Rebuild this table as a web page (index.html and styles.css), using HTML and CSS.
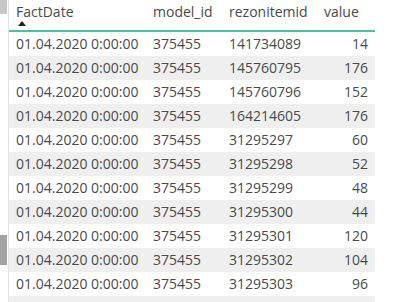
FILE: index.html
```html
<!DOCTYPE html>
<html>
<head>
<meta charset="utf-8">
<link rel="stylesheet" href="styles.css">
</head>
<body>
<div class="page">
  <div class="rail">
    <div class="rail-top"></div>
    <div class="rail-thumb"></div>
  </div>
  <div class="table">
    <div class="row head">
      <div class="cell c1">FactDate<span class="sort"></span></div>
      <div class="cell c2">model_id</div>
      <div class="cell c3">rezonitemid</div>
      <div class="cell c4 hv">value</div>
    </div>
    <div class="row"><div class="cell c1">01.04.2020 0:00:00</div><div class="cell c2">375455</div><div class="cell c3">141734089</div><div class="cell c4">14</div></div>
    <div class="row alt"><div class="cell c1">01.04.2020 0:00:00</div><div class="cell c2">375455</div><div class="cell c3">145760795</div><div class="cell c4">176</div></div>
    <div class="row"><div class="cell c1">01.04.2020 0:00:00</div><div class="cell c2">375455</div><div class="cell c3">145760796</div><div class="cell c4">152</div></div>
    <div class="row alt"><div class="cell c1">01.04.2020 0:00:00</div><div class="cell c2">375455</div><div class="cell c3">164214605</div><div class="cell c4">176</div></div>
    <div class="row"><div class="cell c1">01.04.2020 0:00:00</div><div class="cell c2">375455</div><div class="cell c3">31295297</div><div class="cell c4">60</div></div>
    <div class="row alt"><div class="cell c1">01.04.2020 0:00:00</div><div class="cell c2">375455</div><div class="cell c3">31295298</div><div class="cell c4">52</div></div>
    <div class="row"><div class="cell c1">01.04.2020 0:00:00</div><div class="cell c2">375455</div><div class="cell c3">31295299</div><div class="cell c4">48</div></div>
    <div class="row alt"><div class="cell c1">01.04.2020 0:00:00</div><div class="cell c2">375455</div><div class="cell c3">31295300</div><div class="cell c4">44</div></div>
    <div class="row"><div class="cell c1">01.04.2020 0:00:00</div><div class="cell c2">375455</div><div class="cell c3">31295301</div><div class="cell c4">120</div></div>
    <div class="row alt"><div class="cell c1">01.04.2020 0:00:00</div><div class="cell c2">375455</div><div class="cell c3">31295302</div><div class="cell c4">104</div></div>
    <div class="row"><div class="cell c1">01.04.2020 0:00:00</div><div class="cell c2">375455</div><div class="cell c3">31295303</div><div class="cell c4">96</div></div>
    <div class="row alt"><div class="cell c1">01.04.2020 0:00:00</div><div class="cell c2">375455</div><div class="cell c3">31295304</div><div class="cell c4">88</div></div>
  </div>
</div>
</body>
</html>
```
FILE: styles.css
```css
html, body {
  margin: 0;
  padding: 0;
  background: #ffffff;
  overflow: hidden;
}
.page {
  display: flex;
  width: 393px;
  height: 302px;
  overflow: hidden;
  font-family: "Open Sans", "Noto Sans", sans-serif;
  font-size: 14px;
  color: #4a4a4a;
}
.rail {
  width: 8px;
  flex: none;
  border-right: 1px solid #e3e3e3;
  display: flex;
  flex-direction: column;
}
.rail-top {
  width: 7px;
  height: 14px;
  background: #c6c6c6;
}
.rail-thumb {
  width: 7px;
  height: 30px;
  margin-top: 221px;
  background: #a3a3a3;
}
.table {
  width: 366px;
  flex: none;
  display: flex;
  flex-direction: column;
}
.row {
  display: flex;
  height: 24px;
  flex: none;
  align-items: center;
}
.row.alt {
  background: #efefef;
}
.row.head {
  height: 30px;
  border-bottom: 2px solid #4dbcae;
  align-items: flex-start;
}
.cell {
  box-sizing: border-box;
  padding: 0 7px;
  white-space: nowrap;
  line-height: 20px;
}
.head .cell {
  padding-top: 2px;
  position: relative;
}
.c1 { width: 136px; }
.c2 { width: 76px; padding-left: 8px; }
.c3 { width: 95px; padding-left: 8px; }
.c4 { width: 59px; text-align: right; }
.c4.hv { text-align: left; padding-left: 8px; }
.sort {
  position: absolute;
  left: 9px;
  top: 21px;
  width: 0;
  height: 0;
  border-left: 4px solid transparent;
  border-right: 4px solid transparent;
  border-bottom: 5px solid #222;
}
```
